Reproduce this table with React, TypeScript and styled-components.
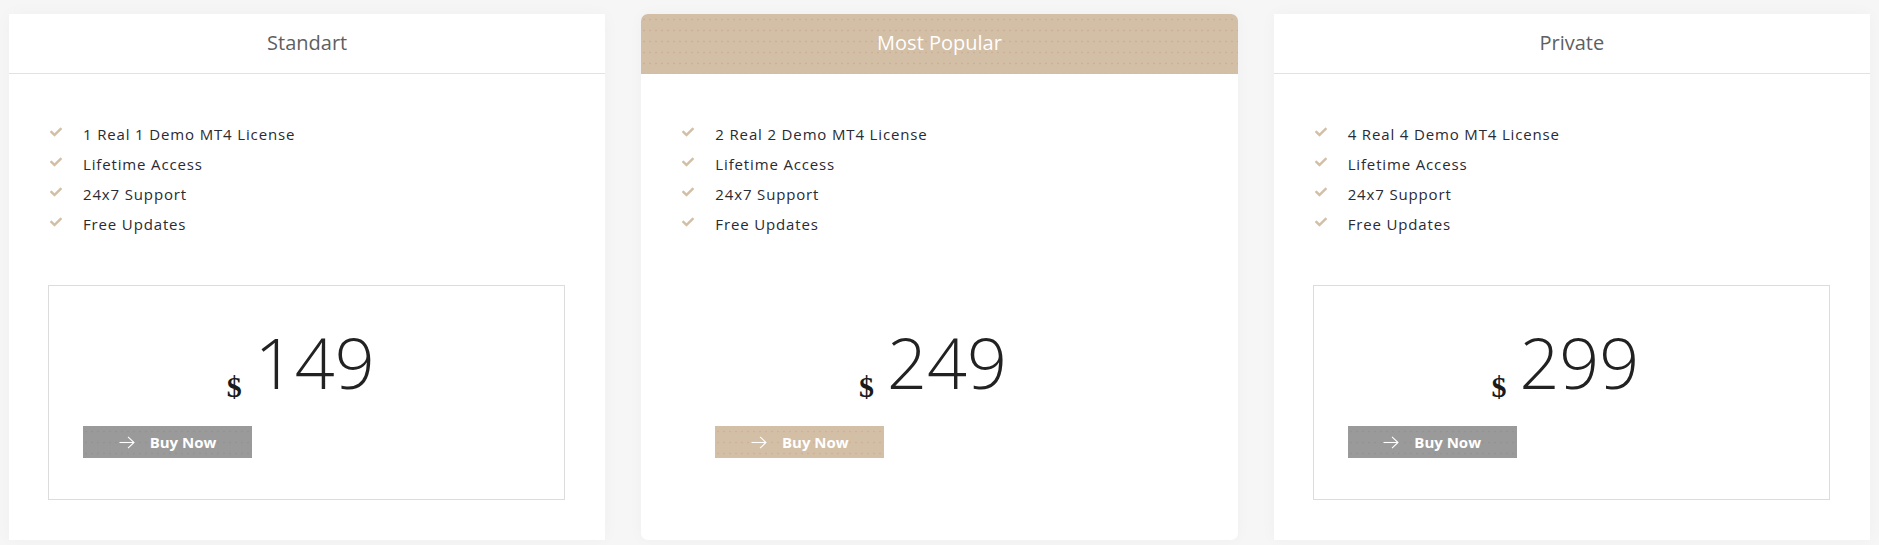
import React from "react";
import styled, { createGlobalStyle, css } from "styled-components";
import { FaCheck } from "react-icons/fa";

const GlobalStyle = createGlobalStyle`
  html, body {
    margin: 0;
    padding: 0;
    background: #f6f6f6;
    font-family: "Open Sans", "Noto Sans", Arial, sans-serif;
  }
  * { box-sizing: border-box; }
`;

const TAN = "#d3bea6";

const dots = (color: string) => css`
  background-image: radial-gradient(${color} 0.5px, transparent 0.8px);
  background-size: 6px 11px;
`;

const Section = styled.div`
  display: grid;
  grid-template-columns: repeat(3, 1fr);
  gap: 36px;
  padding: 14px 9px 5px 9px;
`;

const Card = styled.div<{ $featured?: boolean }>`
  background: #fff;
  display: flex;
  flex-direction: column;
  box-shadow: 0 0 16px rgba(0, 0, 0, 0.03);
  border-radius: ${(p) => (p.$featured ? "7px" : "0")};
`;

const Header = styled.div<{ $featured?: boolean }>`
  height: 60px;
  display: flex;
  align-items: center;
  justify-content: center;
  padding-bottom: 2px;
  font-size: 20px;
  color: ${(p) => (p.$featured ? "#fff" : "#5f5f5f")};
  border-bottom: 1px solid ${(p) => (p.$featured ? "transparent" : "#e2e2e2")};
  ${(p) =>
    p.$featured &&
    css`
      background-color: ${TAN};
      ${dots("rgba(175, 125, 100, 0.22)")}
      border-radius: 7px 7px 0 0;
    `}
`;

const Body = styled.div`
  padding: 45px 40px 40px 39px;
  display: flex;
  flex-direction: column;
`;

const Features = styled.ul`
  list-style: none;
  margin: 0 0 46px 0;
  padding: 0 0 0 1px;
`;

const Feature = styled.li`
  display: flex;
  align-items: center;
  height: 30px;
  gap: 20px;
  font-size: 15px;
  letter-spacing: 0.85px;
  color: #2a2a33;
`;

const CheckIcon = styled(FaCheck)`
  width: 14px;
  height: 12px;
  color: ${TAN};
  flex: none;
  margin-top: -4px;
`;

const PriceBox = styled.div<{ $featured?: boolean }>`
  border: 1px solid ${(p) => (p.$featured ? "transparent" : "#dcdcdc")};
  padding: 41px 34px 41px 34px;
`;

const PriceLine = styled.div`
  text-align: center;
  font-size: 70px;
  line-height: 70px;
  height: 70px;
  color: #222;
  font-weight: 350;
  padding-right: 12px;
`;

const Dollar = styled.span`
  font-family: "Liberation Serif", "Times New Roman", serif;
  font-weight: 700;
  font-size: 30px;
  line-height: 0;
  vertical-align: -8px;
  margin-right: 13px;
  color: #1a1a1a;
`;

const Button = styled.a<{ $featured?: boolean }>`
  margin-top: 29px;
  width: 169px;
  height: 32px;
  display: flex;
  align-items: center;
  justify-content: center;
  gap: 15px;
  color: #fff;
  font-weight: 700;
  font-size: 15px;
  text-decoration: none;
  cursor: pointer;
  background-color: ${(p) => (p.$featured ? TAN : "#9a9a9a")};
  ${(p) => dots(p.$featured ? "rgba(180, 125, 100, 0.2)" : "rgba(120, 120, 120, 0.2)")}
`;

const Arrow = () => (
  <svg width="16" height="13" viewBox="0 0 16 13" fill="none" stroke="#fff" strokeWidth="1.1">
    <path d="M0.5 6.5H15" />
    <path d="M9 0.8L15 6.5L9 12.2" />
  </svg>
);

type Plan = {
  title: string;
  featured?: boolean;
  features: string[];
  price: string;
};

const plans: Plan[] = [
  {
    title: "Standart",
    features: ["1 Real 1 Demo MT4 License", "Lifetime Access", "24x7 Support", "Free Updates"],
    price: "149",
  },
  {
    title: "Most Popular",
    featured: true,
    features: ["2 Real 2 Demo MT4 License", "Lifetime Access", "24x7 Support", "Free Updates"],
    price: "249",
  },
  {
    title: "Private",
    features: ["4 Real 4 Demo MT4 License", "Lifetime Access", "24x7 Support", "Free Updates"],
    price: "299",
  },
];

export default function App() {
  return (
    <>
      <GlobalStyle />
      <Section>
        {plans.map((p) => (
          <Card key={p.title} $featured={p.featured}>
            <Header $featured={p.featured}>{p.title}</Header>
            <Body>
              <Features>
                {p.features.map((f) => (
                  <Feature key={f}>
                    <CheckIcon />
                    <span>{f}</span>
                  </Feature>
                ))}
              </Features>
              <PriceBox $featured={p.featured}>
                <PriceLine>
                  <Dollar>$</Dollar>
                  {p.price}
                </PriceLine>
                <Button $featured={p.featured}>
                  <Arrow />
                  Buy Now
                </Button>
              </PriceBox>
            </Body>
          </Card>
        ))}
      </Section>
    </>
  );
}
